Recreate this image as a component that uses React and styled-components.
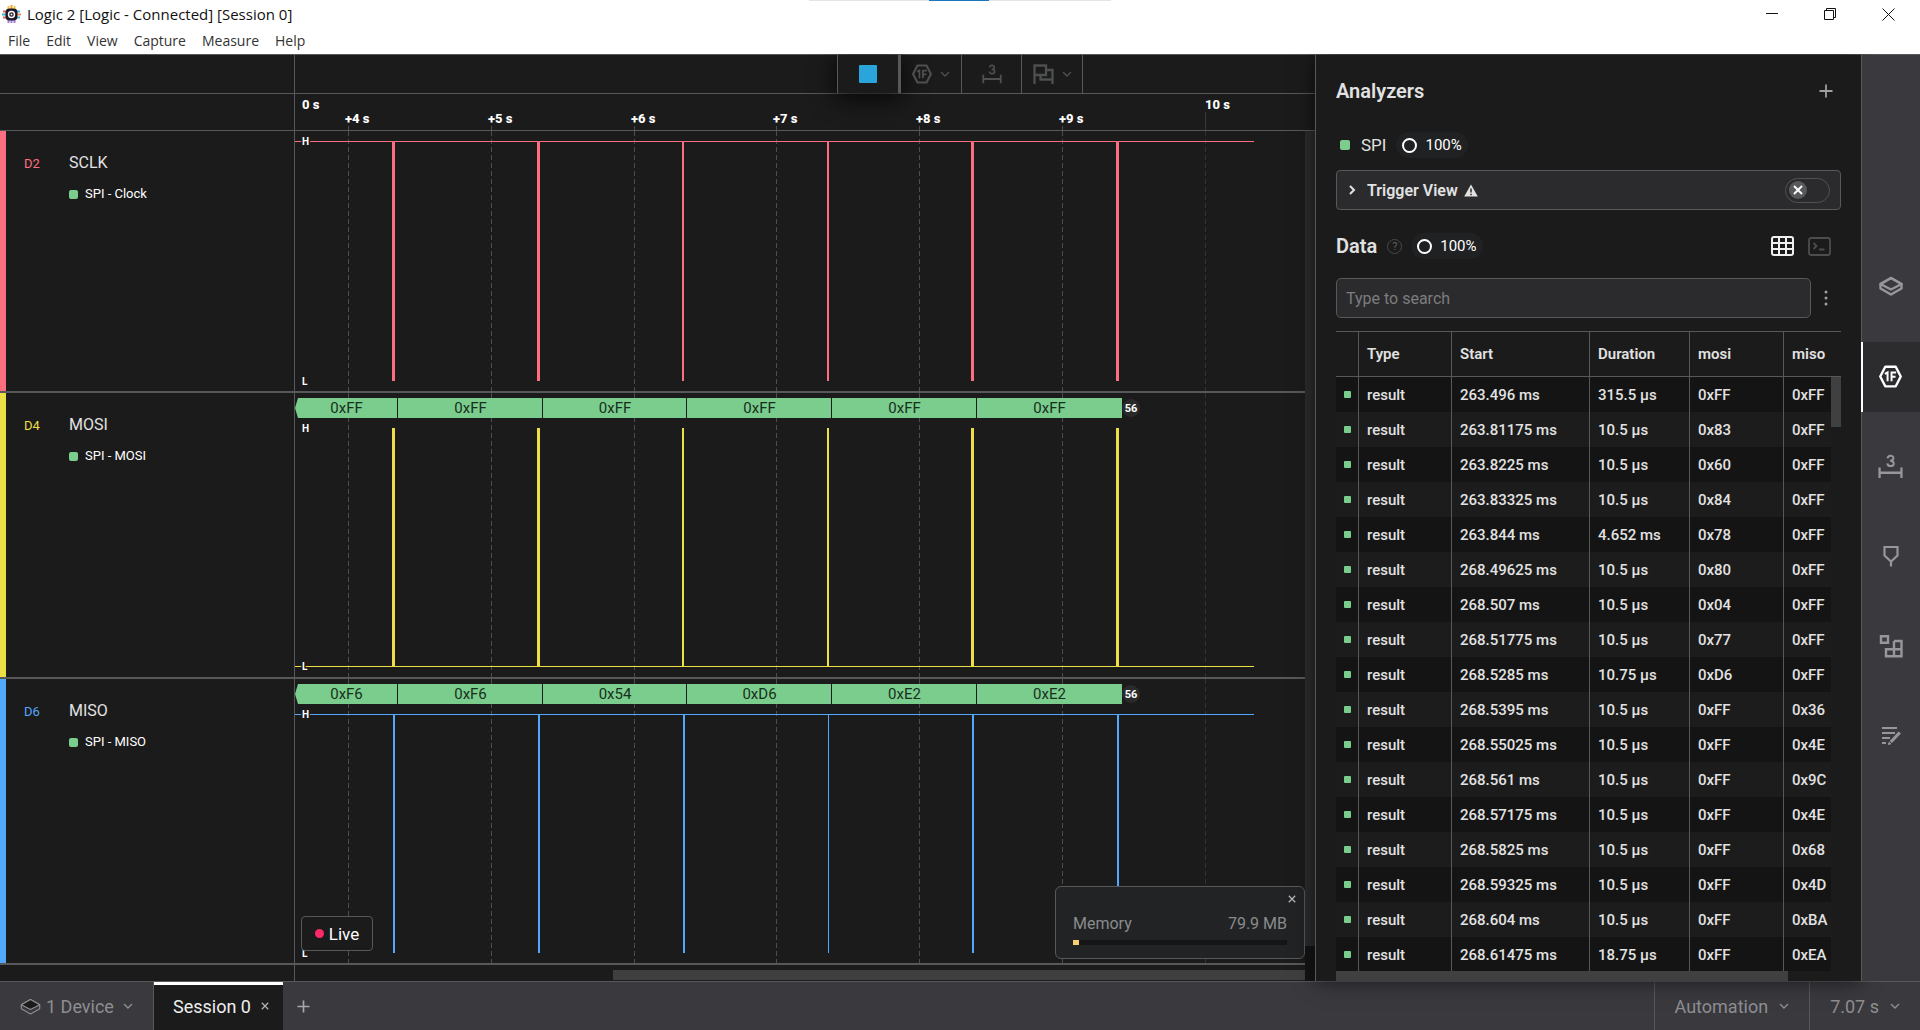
import React, { useState } from 'react';
import styled, { createGlobalStyle } from 'styled-components';

const GlobalStyle = createGlobalStyle`
  * {
    box-sizing: border-box;
  }

  body {
    margin: 0;
    background: #1b1b1b;
    color: #e2e2e2;
    font-family: Roboto, 'Liberation Sans', sans-serif;
    font-size: 15px;
    overflow: hidden;
  }

  button, input {
    font-family: inherit;
    font-size: inherit;
    color: inherit;
  }

  svg {
    display: block;
    flex-shrink: 0;
  }
`;

const line = '#57585a';
const green = '#7bcd8d';

const Page = styled.div`
  height: 100vh;
  display: flex;
  flex-direction: column;
`;

const WindowHeader = styled.header`
  position: relative;
  z-index: 2;
  height: 54px;
  flex-shrink: 0;
  background: #fff;
  color: #111;
  font-family: 'Open Sans', 'Noto Sans', sans-serif;
  font-size: 14px;

  &::before {
    content: '';
    position: absolute;
    top: 0;
    left: 50%;
    width: 302px;
    height: 1px;
    transform: translateX(-50%);
    background: linear-gradient(to right, #e4e4e4 120px, #1a77bd 120px, #1a77bd 180px, #e4e4e4 180px);
  }
`;

const TitleRow = styled.div`
  display: flex;
  align-items: center;
  height: 28px;
  padding: 0 6px 0 2px;
  gap: 6px;
`;

const Title = styled.span`
  flex: 1;
  white-space: nowrap;
  font-size: 15px;
`;

const WindowButton = styled.button`
  display: flex;
  align-items: center;
  justify-content: center;
  width: 52px;
  height: 28px;
  padding: 0;
  border: none;
  background: none;
`;

const MenuRow = styled.nav`
  display: flex;
  align-items: center;
  height: 26px;
`;

const MenuItem = styled.button`
  padding: 0 8px;
  border: none;
  background: none;
  line-height: 20px;
  color: #333;
`;

const Main = styled.main`
  flex: 1;
  min-height: 0;
  display: flex;
  border-top: 1px solid ${line};
`;

const Workspace = styled.section`
  flex: 1;
  min-width: 0;
  display: flex;
  flex-direction: column;
`;

const SplitRow = styled.div`
  display: flex;
  flex-shrink: 0;
  height: ${props => props.height}px;
  border-bottom: ${props => props.rule || 1}px solid ${line};
`;

const SideCell = styled.div`
  width: 295px;
  flex-shrink: 0;
  border-right: 1px solid ${line};
`;

const WaveCell = styled.div`
  flex: 1;
  min-width: 0;
  overflow: hidden;
`;

const ToolbarCell = styled(WaveCell)`
  overflow: visible;
`;

const Toolbar = styled.div`
  display: flex;
  height: 38px;
  width: 246px;
  margin-left: calc(50vw - 418px);
`;

const ToolButton = styled.button`
  display: flex;
  align-items: center;
  justify-content: center;
  gap: 8px;
  flex: 1;
  padding: 0;
  border: none;
  border-right: 1px solid ${line};
  background: none;
  color: #4e4f50;
`;

const StopButton = styled(ToolButton)`
  flex: 0 0 64px;
  border-left: 1px solid ${line};
  border-right: 3px solid ${line};
  background: #1b1b1b;
  box-shadow: 0 4px 24px 2px rgba(0, 0, 0, 0.75);
`;

const StopSquare = styled.span`
  width: 18px;
  height: 18px;
  border-radius: 1px;
  background: #29a5dc;
`;

const Channels = styled.div`
  display: flex;
  flex: 1;
  min-height: 0;
`;

const ChannelList = styled.div`
  position: relative;
  flex: 1;
  min-width: 0;
  overflow: hidden;
  display: flex;
  flex-direction: column;
`;

const ChannelSide = styled(SideCell)`
  display: flex;
  align-items: flex-start;
  border-left: 6px solid ${props => props.color};
  padding: 21px 0 0 18px;
`;

const ChannelId = styled.span`
  width: 45px;
  line-height: 24px;
  font-size: 13px;
  color: ${props => props.color};
`;

const ChannelName = styled.div`
  font-size: 16px;
  line-height: 22px;
`;

const ChannelTag = styled.div`
  display: flex;
  align-items: center;
  gap: 7px;
  margin-top: 9px;
  font-size: 13px;
  line-height: 22px;
  color: #fff;
`;

const Swatch = styled.span`
  width: ${props => props.size}px;
  height: ${props => props.size}px;
  border-radius: ${props => props.size > 8 ? 2 : 1}px;
  background: ${green};
  flex-shrink: 0;
`;

const Chart = styled.svg`
  width: 100%;
  height: 100%;
`;

const TrackFooter = styled.div`
  display: flex;
  flex: 1;
`;

const HorizontalThumb = styled.div`
  width: 68.5%;
  height: 10px;
  margin: 5px 0 0 auto;
  background: #3f3f40;
`;

const VerticalTrack = styled.div`
  width: 10px;
  padding-bottom: 35px;
  background: #141414;
`;

const VerticalThumb = styled.div`
  height: 100%;
  background: #2c2c2d;
`;

const LiveButton = styled.button`
  position: absolute;
  left: 301px;
  bottom: 30px;
  display: flex;
  align-items: center;
  justify-content: center;
  gap: 5px;
  width: 72px;
  height: 35px;
  padding: 0;
  border: 1px solid ${line};
  border-radius: 4px;
  background: #1b1b1b;
  font-size: 17px;
  color: #fff;
`;

const LiveDot = styled.span`
  width: 9px;
  height: 9px;
  border-radius: 50%;
  background: #fb2a66;
`;

const MemoryCard = styled.aside`
  position: absolute;
  right: 0;
  bottom: 22px;
  width: 250px;
  height: 73px;
  padding: 28px 17px 0;
  border: 1px solid ${line};
  border-radius: 6px;
  background: #212325;
  color: #8b8c8d;
  font-size: 16px;
`;

const MemoryRow = styled.div`
  display: flex;
  justify-content: space-between;
  line-height: 18px;
`;

const MemoryBar = styled.div`
  height: 5px;
  margin-top: 7px;
  background: #151515;
`;

const MemoryFill = styled.div`
  height: 5px;
  background: #f7cf73;
`;

const MemoryClose = styled.button`
  position: absolute;
  top: 8px;
  right: 8px;
  padding: 0;
  border: none;
  background: none;
  color: #b5b5b5;
`;

const Panel = styled.section`
  position: relative;
  width: 546px;
  flex-shrink: 0;
  display: flex;
  flex-direction: column;
  padding: 7px 20px 0;
  border-left: 1px solid ${line};
  background: #1b1b1b;
  box-shadow: 0 0 20px rgba(0, 0, 0, 0.6);
`;

const PanelRow = styled.div`
  display: flex;
  align-items: center;
  flex-shrink: 0;
  height: ${props => props.height}px;
`;

const AnalyzerRow = styled(PanelRow)`
  padding-left: 4px;
`;

const DataRow = styled(PanelRow)`
  padding: 4px 3px 0 0;
`;

const Heading = styled.h2`
  margin: 0;
  font-size: 20px;
  font-weight: 600;
`;

const IconButton = styled.button`
  display: flex;
  align-items: center;
  justify-content: center;
  width: ${props => props.width || 30}px;
  height: 30px;
  padding: 0;
  border: none;
  background: none;
  color: ${props => props.color || '#a0a0a0'};
`;

const Spacer = styled.div`
  flex: 1;
`;

const AnalyzerName = styled.span`
  margin: 0 10px 0 11px;
  font-size: 17px;
`;

const Progress = styled.span`
  display: flex;
  align-items: center;
  gap: 8px;
  height: 26px;
  padding: 0 6px;
  border-radius: 13px;
  background: #1f2123;
  color: #fff;
`;

const Ring = styled.span`
  width: 15px;
  height: 15px;
  border: 2px solid #fff;
  border-radius: 50%;
`;

const HelpMark = styled.button`
  width: 15px;
  height: 15px;
  margin: 0 9px 0 10px;
  padding: 0;
  border: 1px solid #48494a;
  border-radius: 50%;
  background: none;
  font-size: 11px;
  line-height: 13px;
  color: #5f6061;
`;

const TriggerBox = styled.div`
  display: flex;
  align-items: center;
  flex-shrink: 0;
  height: 40px;
  padding: 0 10px 0 10px;
  border: 1px solid ${line};
  border-radius: 4px;
  background: #2b2b2d;
`;

const TriggerLabel = styled.label`
  flex: 1;
  display: flex;
  align-items: center;
  gap: 6px;
  margin-left: 10px;
  font-size: 16px;
  font-weight: 600;
`;

const Switch = styled.span`
  position: relative;
  display: flex;
  align-items: center;
  width: 45px;
  height: 25px;
  padding-left: 3px;
  border: 1px solid #505153;
  border-radius: 13px;
  color: #fff;
`;

const SwitchInput = styled.input`
  position: absolute;
  inset: 0;
  width: 100%;
  height: 100%;
  margin: 0;
  opacity: 0;
`;

const Knob = styled.span`
  display: flex;
  align-items: center;
  justify-content: center;
  width: 18px;
  height: 18px;
  border-radius: 50%;
  background: #58595b;
`;

const SearchInput = styled.input`
  flex: 1;
  min-width: 0;
  height: 40px;
  padding: 0 9px;
  border: 1px solid ${line};
  border-radius: 5px;
  background: #2b2b2d;
  font-size: 16px;
  outline: none;

  &::placeholder {
    color: #7c7d7f;
  }
`;

const TableArea = styled.div`
  position: relative;
  flex: 1;
  min-height: 0;
  margin-top: 13px;
  overflow: hidden;
  border-top: 1px solid ${line};
`;

const Table = styled.table`
  width: 100%;
  table-layout: fixed;
  border-collapse: separate;
  border-spacing: 0;
`;

const Th = styled.th`
  height: 45px;
  padding: 0 0 0 8px;
  border-bottom: 1px solid ${line};
  border-left: 1px solid ${line};
  font-weight: 600;
  text-align: left;

  &:first-child {
    border-left: none;
  }
`;

const Tr = styled.tr`
  background: ${props => props.dark ? '#141414' : '#1c1c1c'};
`;

const Td = styled.td`
  height: 35px;
  padding: 0 0 0 8px;
  border-left: 1px solid ${line};
  font-weight: 500;
  white-space: nowrap;

  &:first-child {
    border-left: none;
  }
`;

const TableScroll = styled.div`
  position: absolute;
  top: 45px;
  right: 0;
  bottom: 10px;
  width: 10px;
  background: #1b1b1b;
`;

const TableScrollThumb = styled.div`
  height: 50px;
  background: #404041;
`;

const TableBottomScroll = styled.div`
  position: absolute;
  left: 0;
  right: 0;
  bottom: 0;
  height: 10px;
  background: #1b1b1b;
`;

const TableBottomThumb = styled.div`
  width: 452px;
  height: 10px;
  background: #404041;
`;

const Rail = styled.nav`
  position: relative;
  display: flex;
  flex-direction: column;
  gap: 20px;
  width: 59px;
  flex-shrink: 0;
  padding-top: 197px;
  border-left: 1px solid ${line};
  background: #3a393e;
`;

const RailButton = styled.button`
  display: flex;
  align-items: center;
  justify-content: center;
  height: 70px;
  margin-left: -1px;
  padding: 0 2px 2px 0;
  border: none;
  border-left: 2px solid ${props => props.active ? '#fff' : 'transparent'};
  background: ${props => props.active ? '#2c2c2e' : 'none'};
  color: ${props => props.active ? '#fff' : '#97979a'};
`;

const Footer = styled.footer`
  display: flex;
  flex-shrink: 0;
  height: 49px;
  border-top: 1px solid ${line};
  background: #3a393e;
  color: #8e8e91;
  font-size: 18px;
`;

const FooterButton = styled.button`
  display: flex;
  align-items: center;
  gap: 11px;
  padding: 0 20px;
  border: none;
  background: none;
`;

const DeviceButton = styled(FooterButton)`
  gap: 5px;
  width: 154px;
  border-right: 1px solid ${line};
`;

const DeviceText = styled.span`
  flex: 1;
  text-align: left;
`;

const RightButton = styled(FooterButton)`
  border-left: 1px solid ${line};
`;

const NewTabButton = styled(FooterButton)`
  padding: 0 14px;
  color: #a8a8aa;
`;

const SessionTab = styled.div`
  display: flex;
  align-items: center;
  gap: 10px;
  width: 129px;
  padding: 0 0 3px 19px;
  border-top: 3px solid #fff;
  background: #1b1b1b;
  color: #eee;
  white-space: nowrap;
`;

const TabClose = styled.button`
  padding: 0;
  border: none;
  background: none;
  color: #b0b0b0;
`;

// time axis
const START = 53;
const PX_PER_SECOND = 142.8;
const SECONDS = [4, 5, 6, 7, 8, 9, 10];
const secondX = s => Math.round(START + (s - 4) * PX_PER_SECOND);

const TRACE_END = 959;
const PULSES = [97, 242, 387, 532, 676, 821];
const FRAME_EDGES = [0, 103, 248, 392, 537, 682, 827];

const CHANNELS = [
  {
    id: 'D2', name: 'SCLK', tag: 'SPI - Clock', color: '#fd6e80', height: 260,
    high: 10, low: 250, idle: 'high', delay: 0, widths: [3, 3, 2, 2, 3, 3],
  },
  {
    id: 'D4', name: 'MOSI', tag: 'SPI - MOSI', color: '#ecdf45', height: 284,
    high: 35, low: 273, idle: 'low', delay: 0, widths: [3, 3, 2, 2, 3, 3],
    frames: ['0xFF', '0xFF', '0xFF', '0xFF', '0xFF', '0xFF'],
  },
  {
    id: 'D6', name: 'MISO', tag: 'SPI - MISO', color: '#52a8fa', height: 284,
    high: 35, low: 274, idle: 'high', delay: 1, widths: [2, 2, 2, 1, 2, 2],
    frames: ['0xF6', '0xF6', '0x54', '0xD6', '0xE2', '0xE2'],
  },
];

const ROWS = [
  ['263.496 ms', '315.5 µs', '0xFF', '0xFF'],
  ['263.81175 ms', '10.5 µs', '0x83', '0xFF'],
  ['263.8225 ms', '10.5 µs', '0x60', '0xFF'],
  ['263.83325 ms', '10.5 µs', '0x84', '0xFF'],
  ['263.844 ms', '4.652 ms', '0x78', '0xFF'],
  ['268.49625 ms', '10.5 µs', '0x80', '0xFF'],
  ['268.507 ms', '10.5 µs', '0x04', '0xFF'],
  ['268.51775 ms', '10.5 µs', '0x77', '0xFF'],
  ['268.5285 ms', '10.75 µs', '0xD6', '0xFF'],
  ['268.5395 ms', '10.5 µs', '0xFF', '0x36'],
  ['268.55025 ms', '10.5 µs', '0xFF', '0x4E'],
  ['268.561 ms', '10.5 µs', '0xFF', '0x9C'],
  ['268.57175 ms', '10.5 µs', '0xFF', '0x4E'],
  ['268.5825 ms', '10.5 µs', '0xFF', '0x68'],
  ['268.59325 ms', '10.5 µs', '0xFF', '0x4D'],
  ['268.604 ms', '10.5 µs', '0xFF', '0xBA'],
  ['268.61475 ms', '18.75 µs', '0xFF', '0xEA'],
];

const AppIcon = () => (
  <svg width="19" height="19" viewBox="0 0 19 19">
    <g strokeWidth="2">
      <path d="M6.5 1v4M12.5 1v4" stroke="#f5c542" />
      <path d="M9.5 0v4" stroke="#e8a33a" />
      <path d="M6.5 14v4M12.5 14v4M9.5 15v3" stroke="#a77bdc" />
      <path d="M1 6.5h4M1 12.5h4" stroke="#f0605f" />
      <path d="M0 9.5h4" stroke="#3fb6cf" />
      <path d="M14 6.5h4M14 12.5h4" stroke="#3fb6e8" />
      <path d="M15 9.5h4" stroke="#f0884f" />
    </g>
    <rect x="3.5" y="3.5" width="12" height="12" rx="4" fill="#1d1a26" />
    <circle cx="9.5" cy="9.5" r="3" fill="none" stroke="#fff" strokeWidth="1.4" />
    <circle cx="9.5" cy="9.5" r="1" fill="#fff" />
  </svg>
);

const Chevron = ({ right }) => (
  <svg width="10" height="10" viewBox="0 0 10 10" fill="none" stroke="currentColor" strokeWidth={right ? 2 : 1.4}>
    <path d={right ? 'M3 1l4 4-4 4' : 'M1 3l4 4 4-4'} />
  </svg>
);

const Cross = ({ size = 8, width = 1.3 }) => (
  <svg width={size} height={size} viewBox="0 0 8 8" fill="none" stroke="currentColor" strokeWidth={width}>
    <path d="M.8.8l6.4 6.4M7.2.8L.8 7.2" />
  </svg>
);

const Plus = ({ size = 14 }) => (
  <svg width={size} height={size} viewBox="0 0 14 14" stroke="currentColor" strokeWidth="1.8">
    <path d="M7 .5v13M.5 7h13" />
  </svg>
);

const HexIcon = ({ size = 20 }) => (
  <svg width={size} height={size} viewBox="0 0 22 22" fill="none">
    <path d="M6 1.6h10L20.8 11 16 20.4H6L1.2 11z" stroke="currentColor" strokeWidth="2.3" strokeLinejoin="round" />
    <path d="M5.6 8.4L8.2 7v8.6M12 15.6V7.2h4.4M12 11.3h3.8" stroke="currentColor" strokeWidth="1.9" />
  </svg>
);

const MeasureIcon = ({ size = 20 }) => (
  <svg width={size} height={size} viewBox="0 0 24 24" fill="none" stroke="currentColor">
    <path d="M1.5 13v10M22.5 13v10M1.5 18h21" strokeWidth="2.2" />
    <path d="M9.2 4.2c.2-3.4 5.6-3.4 5.6-.3 0 1.7-1.2 2.500-3.200 2.500 2.200 0 3.500.8 3.500 2.600 0 3.500-5.900 3.500-6.100 0" strokeWidth="1.9" />
  </svg>
);

const FlagsIcon = () => (
  <svg width="21" height="20" viewBox="0 0 21 20" fill="none" stroke="currentColor" strokeWidth="2.300">
    <path d="M1.500 20V1.500H13v9.500H1.500M13 6h6.500v14M7.500 11v4.500H19" />
  </svg>
);

const LayersIcon = ({ width = 1.800, size = 24, fill = 'none' }) => (
  <svg width={size} height={size} viewBox="0 0 24 24" fill="none" stroke="currentColor" strokeWidth={width} strokeLinejoin="round">
    <path d="M1.500 10L12 4l10.500 6v4.500L12 20.500l-10.500-6z" />
    <path d="M1.500 10L12 4l10.500 6L12 15.500z" fill={fill} />
  </svg>
);

const MarkerIcon = () => (
  <svg width="20" height="22" viewBox="0 0 20 22" fill="none" stroke="currentColor" strokeWidth="2.200">
    <path d="M3.500 2h13v8.500L10 16.500 3.500 10.500zM10 16v5.500" />
  </svg>
);

const BlocksIcon = () => (
  <svg width="24" height="24" viewBox="0 0 24 24" fill="none" stroke="currentColor" strokeWidth="2.400">
    <path d="M2 2.300h7v6.500H2zM15 7h7.500v15.300H7v-7h15.500M15 7v15.300" />
  </svg>
);

const NotesIcon = () => (
  <svg width="22" height="20" viewBox="0 0 22 20" fill="none" stroke="currentColor" strokeWidth="2">
    <path d="M2 2h15M2 7h13M2 12h8M2 17h4" />
    <path d="M19.800 6.500l-9 9.500" strokeWidth="3.200" />
    <path d="M8.500 18.500l.5-2.200 1.800 1.500z" fill="currentColor" strokeWidth="1" />
  </svg>
);

const GridIcon = () => (
  <svg width="23" height="20" viewBox="0 0 23 20" fill="none" stroke="currentColor" strokeWidth="2">
    <rect x="1" y="1" width="21" height="18" rx="2" />
    <path d="M1 7h21M1 13h21M8 1v18M15 1v18" />
  </svg>
);

const TerminalIcon = () => (
  <svg width="23" height="19" viewBox="0 0 23 19" fill="none" stroke="currentColor" strokeWidth="1.800">
    <rect x="1" y="1" width="21" height="17" rx="2" />
    <path d="M5.500 6l3 3-3 3M11 12.500h5.500" />
  </svg>
);

const WarningIcon = () => (
  <svg width="14" height="13" viewBox="0 0 14 13">
    <path d="M7 .5L13.800 12.500H.2z" fill="currentColor" />
    <path d="M7 4.500v4M7 9.700v1.500" stroke="#2b2b2d" strokeWidth="1.500" />
  </svg>
);

const KebabIcon = () => (
  <svg width="4" height="18" viewBox="0 0 4 18" fill="currentColor">
    <circle cx="2" cy="3" r="1.500" />
    <circle cx="2" cy="9" r="1.500" />
    <circle cx="2" cy="15" r="1.500" />
  </svg>
);

const GridLines = ({ height, top = 0 }) => SECONDS.map(s => (
  <line
    key={s}
    x1={secondX(s) + 0.5}
    x2={secondX(s) + 0.5}
    y1={top}
    y2={height}
    stroke={s === 10 ? '#333' : '#4c4d4e'}
    strokeDasharray="5 3"
  />
));

const Ruler = () => (
  <Chart fill="#fff" fontSize="13" fontWeight="800">
    <text x="7" y="15">0 s</text>
    {SECONDS.slice(0, 6).map(s => (
      <text key={s} x={secondX(s) - 3} y="29">{`+${s} s`}</text>
    ))}
    <text x={secondX(10)} y="15">10 s</text>
    <path d={`M${secondX(10) + 0.5} 18v18`} stroke="#3a3a3a" />
    <GridLines top={32} height={36} />
  </Chart>
);

const LevelLabel = ({ y, children }) => (
  <text
    x="7" y={y + 4} fontSize="10" fontWeight="700" fill="#fff"
    stroke="#1b1b1b" strokeWidth="3" paintOrder="stroke"
  >
    {children}
  </text>
);

const Trace = ({ channel }) => {
  const { high, low, idle, delay, widths, color, frames, height } = channel;
  return (
    <Chart>
      <GridLines height={height} />
      <rect x="0" y={channel[idle]} width={TRACE_END} height="1" fill={color} />
      {PULSES.map((x, i) => (
        <rect key={x} x={x + delay} y={high} width={widths[i]} height={low - high} fill={color} />
      ))}
      {frames && frames.map((value, i) => {
        const left = FRAME_EDGES[i];
        const right = FRAME_EDGES[i + 1];
        const end = i === frames.length - 1 ? right : right - 1;
        const start = i === 0 ? 'M3 5L0 15l3 10' : `M${left} 5v20`;
        return (
          <g key={i}>
            <path d={`${start}H${end}V5z`} fill={green} />
            <text x={(left + right) / 2} y="20" textAnchor="middle" fontSize="15" fill="#17301c">{value}</text>
          </g>
        );
      })}
      {frames && (
        <g>
          <circle cx="836" cy="15" r="9" fill="#2a2a2b" />
          <text x="836" y="19" textAnchor="middle" fontSize="11" fontWeight="700" fill="#fff">56</text>
        </g>
      )}
      <LevelLabel y={high}>H</LevelLabel>
      <LevelLabel y={low}>L</LevelLabel>
    </Chart>
  );
};

const RAIL_ITEMS = [
  { name: 'Device settings', icon: <LayersIcon width={2.400} /> },
  { name: 'Analyzers', icon: <HexIcon size={23} /> },
  { name: 'Measurements', icon: <MeasureIcon size={25} /> },
  { name: 'Timing markers', icon: <MarkerIcon /> },
  { name: 'Extensions', icon: <BlocksIcon /> },
  { name: 'Notes', icon: <NotesIcon /> },
];

const Percent = () => (
  <Progress>
    <Ring />
    100%
  </Progress>
);

const AnalyzerPanel = () => {
  const [query, setQuery] = useState('');
  const [trigger, setTrigger] = useState(false);

  return (
    <Panel>
      <PanelRow height={58}>
        <Heading>Analyzers</Heading>
        <Spacer />
        <IconButton aria-label="Add analyzer"><Plus /></IconButton>
      </PanelRow>
      <AnalyzerRow height={50}>
        <Swatch size={10} />
        <AnalyzerName>SPI</AnalyzerName>
        <Percent />
      </AnalyzerRow>
      <TriggerBox>
        <Chevron right />
        <TriggerLabel htmlFor="trigger">
          Trigger View
          <WarningIcon />
        </TriggerLabel>
        <Switch>
          <Knob><Cross size={10} width={1.500} /></Knob>
          <SwitchInput id="trigger" type="checkbox" checked={trigger} onChange={e => setTrigger(e.target.checked)} />
        </Switch>
      </TriggerBox>
      <DataRow height={68}>
        <Heading>Data</Heading>
        <HelpMark aria-label="Help">?</HelpMark>
        <Percent />
        <Spacer />
        <IconButton aria-label="Table view" width={37} color="#f0f0f0"><GridIcon /></IconButton>
        <IconButton aria-label="Terminal view" width={37} color="#4c4d4e"><TerminalIcon /></IconButton>
      </DataRow>
      <PanelRow height={40}>
        <SearchInput
          type="text"
          aria-label="Search data"
          placeholder="Type to search"
          value={query}
          onChange={e => setQuery(e.target.value)}
        />
        <IconButton aria-label="Table options"><KebabIcon /></IconButton>
      </PanelRow>
      <TableArea>
        <Table>
          <colgroup>
            <col width="22" />
            <col width="93" />
            <col width="138" />
            <col width="100" />
            <col width="94" />
            <col />
          </colgroup>
          <thead>
            <tr>
              <Th aria-label="Analyzer" />
              <Th>Type</Th>
              <Th>Start</Th>
              <Th>Duration</Th>
              <Th>mosi</Th>
              <Th>miso</Th>
            </tr>
          </thead>
          <tbody>
            {ROWS.map((row, i) => (
              <Tr key={row[0]} dark={i % 2 === 0 ? 1 : undefined}>
                <Td><Swatch as="div" size={7} /></Td>
                <Td>result</Td>
                {row.map((cell, j) => <Td key={j}>{cell}</Td>)}
              </Tr>
            ))}
          </tbody>
        </Table>
        <TableScroll><TableScrollThumb /></TableScroll>
        <TableBottomScroll><TableBottomThumb /></TableBottomScroll>
      </TableArea>
    </Panel>
  );
};

const App = () => (
  <Page>
    <GlobalStyle />
    <WindowHeader>
      <TitleRow>
        <AppIcon />
        <Title>Logic 2 [Logic - Connected] [Session 0]</Title>
        <WindowButton aria-label="Minimize">
          <svg width="12" height="12" stroke="#111"><path d="M0 5.500h12" /></svg>
        </WindowButton>
        <WindowButton aria-label="Restore">
          <svg width="13" height="13" fill="none" stroke="#111">
            <path d="M.5 2.500h9v9h-9zM2.500 2.500v-2h9v9h-2" />
          </svg>
        </WindowButton>
        <WindowButton aria-label="Close">
          <svg width="13" height="13" stroke="#111"><path d="M.5.5l12 12M12.500.5l-12 12" /></svg>
        </WindowButton>
      </TitleRow>
      <MenuRow>
        {['File', 'Edit', 'View', 'Capture', 'Measure', 'Help'].map(item => (
          <MenuItem key={item}>{item}</MenuItem>
        ))}
      </MenuRow>
    </WindowHeader>
    <Main>
      <Workspace>
        <SplitRow height={39}>
          <SideCell />
          <ToolbarCell>
            <Toolbar>
              <StopButton aria-label="Stop"><StopSquare /></StopButton>
              <ToolButton aria-label="Add analyzer"><HexIcon /><Chevron /></ToolButton>
              <ToolButton aria-label="Add measurement"><MeasureIcon /></ToolButton>
              <ToolButton aria-label="Add marker"><FlagsIcon /><Chevron /></ToolButton>
            </Toolbar>
          </ToolbarCell>
        </SplitRow>
        <SplitRow height={37}>
          <SideCell />
          <WaveCell><Ruler /></WaveCell>
        </SplitRow>
        <Channels>
          <ChannelList>
            {CHANNELS.map(channel => (
              <SplitRow key={channel.id} height={channel.height + 2} rule={2}>
                <ChannelSide color={channel.color}>
                  <ChannelId color={channel.color}>{channel.id}</ChannelId>
                  <div>
                    <ChannelName>{channel.name}</ChannelName>
                    <ChannelTag><Swatch size={9} />{channel.tag}</ChannelTag>
                  </div>
                </ChannelSide>
                <WaveCell><Trace channel={channel} /></WaveCell>
              </SplitRow>
            ))}
            <TrackFooter>
              <SideCell />
              <WaveCell><HorizontalThumb /></WaveCell>
            </TrackFooter>
            <LiveButton><LiveDot />Live</LiveButton>
            <MemoryCard>
              <MemoryRow>
                <span>Memory</span>
                <span>79.9 MB</span>
              </MemoryRow>
              <MemoryBar><MemoryFill style={{ width: '3%' }} /></MemoryBar>
              <MemoryClose aria-label="Close memory"><Cross /></MemoryClose>
            </MemoryCard>
          </ChannelList>
          <VerticalTrack><VerticalThumb /></VerticalTrack>
        </Channels>
      </Workspace>
      <AnalyzerPanel />
      <Rail>
        {RAIL_ITEMS.map(item => (
          <RailButton key={item.name} aria-label={item.name} active={item.name === 'Analyzers' ? 1 : undefined}>
            {item.icon}
          </RailButton>
        ))}
      </Rail>
    </Main>
    <Footer>
      <DeviceButton>
        <LayersIcon size={21} width={1.300} fill="#1b1b1b" />
        <DeviceText>1 Device</DeviceText>
        <Chevron />
      </DeviceButton>
      <SessionTab>
        Session 0
        <TabClose aria-label="Close session"><Cross /></TabClose>
      </SessionTab>
      <NewTabButton aria-label="New session"><Plus size={13} /></NewTabButton>
      <Spacer />
      <RightButton>Automation<Chevron /></RightButton>
      <RightButton>7.07 s<Chevron /></RightButton>
    </Footer>
  </Page>
);

export default App;
